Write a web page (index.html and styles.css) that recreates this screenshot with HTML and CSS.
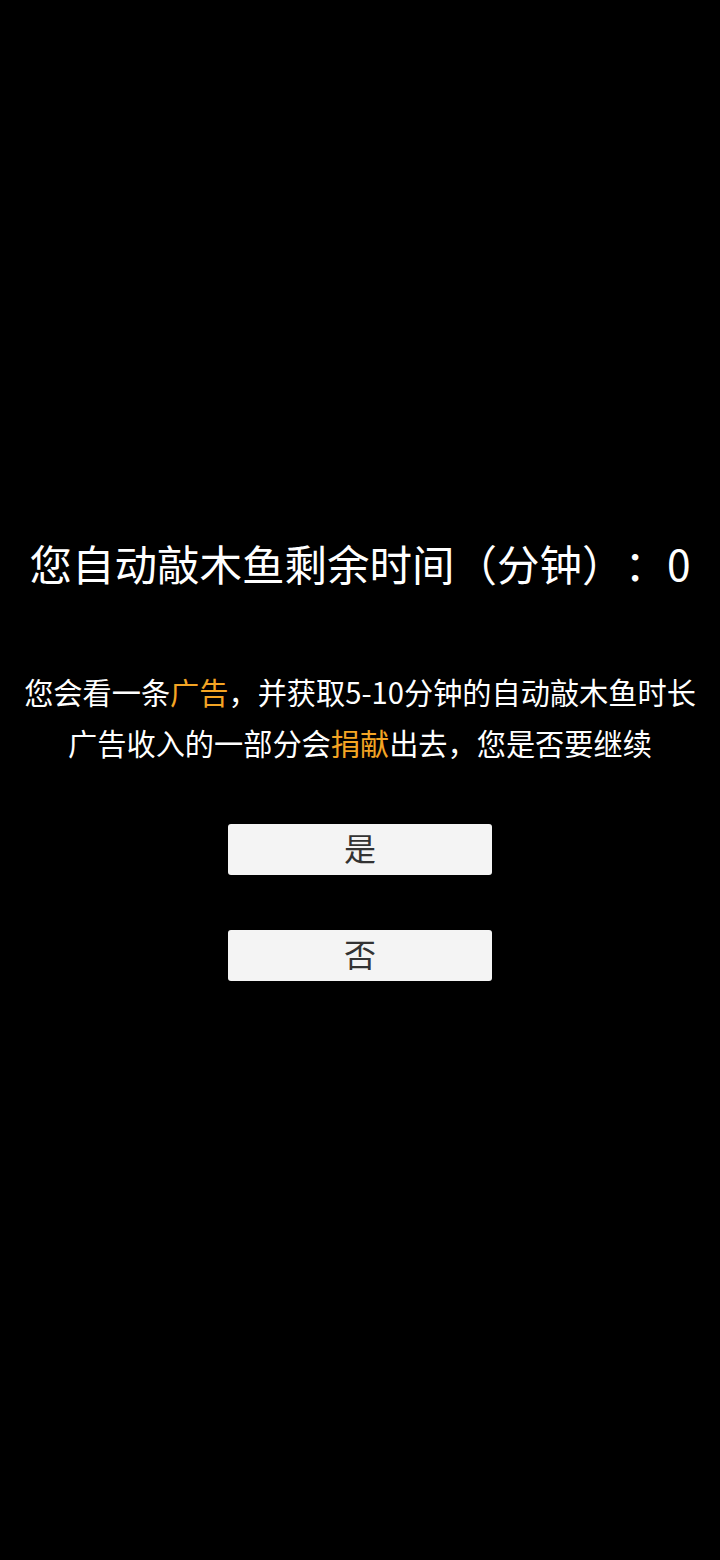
FILE: index.html
```html
<!DOCTYPE html>
<html lang="zh">
<head>
<meta charset="utf-8">
<link rel="stylesheet" href="styles.css">
</head>
<body>
<main class="screen">
  <h1 class="title">您自动敲木鱼剩余时间（分钟）：0</h1>
  <p class="desc">您会看一条<span class="hl">广告</span>，并获取5-10分钟的自动敲木鱼时长<br>广告收入的一部分会<span class="hl">捐献</span>出去，您是否要继续</p>
  <div class="actions">
    <button class="btn">是</button>
    <button class="btn">否</button>
  </div>
</main>
</body>
</html>
```
FILE: styles.css
```css
html, body {
  margin: 0;
  padding: 0;
  background: #000;
}
.screen {
  width: 720px;
  height: 1560px;
  display: flex;
  flex-direction: column;
  align-items: center;
  padding-top: 533px;
  box-sizing: border-box;
  font-family: "Noto Sans CJK SC", "Noto Sans", sans-serif;
  color: #fff;
  text-spacing-trim: space-all;
}
.title {
  margin: 0;
  font-size: 42.5px;
  font-weight: 400;
  line-height: 60px;
  white-space: nowrap;
}
.desc {
  margin: 73px 0 0;
  font-size: 29.2px;
  line-height: 51px;
  text-align: center;
  white-space: nowrap;
}
.hl {
  color: #f4a524;
}
.actions {
  margin-top: 56px;
  display: flex;
  flex-direction: column;
  gap: 55px;
}
.btn {
  width: 264px;
  height: 51px;
  border: none;
  border-radius: 3px;
  background: #f4f4f4;
  color: #333;
  font-family: "Noto Sans CJK SC", sans-serif;
  font-size: 32px;
  line-height: 46px;
  padding: 0 0 5px;
  box-sizing: border-box;
}
```
